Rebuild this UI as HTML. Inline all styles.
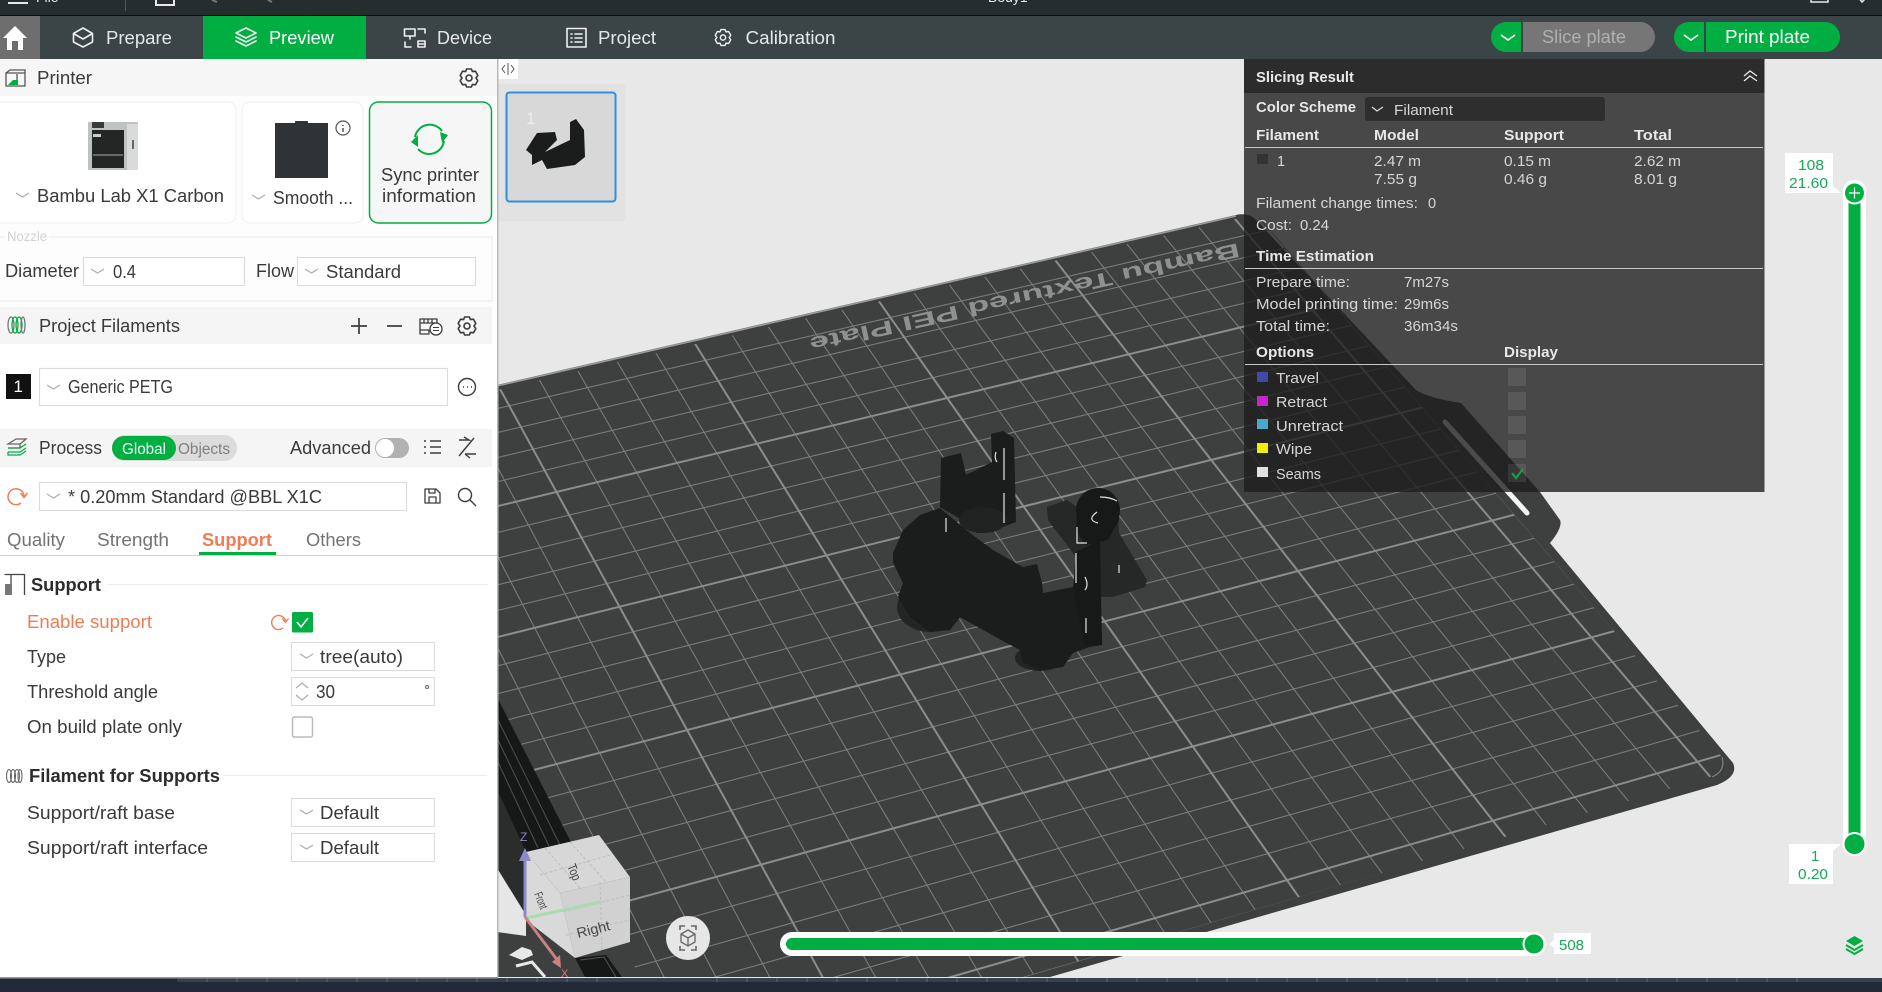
<!DOCTYPE html>
<html lang="en"><head><meta charset="utf-8"><title>Bambu Studio Preview</title>
<style>
html,body{margin:0;padding:0;background:#e8e8e8;width:1882px;height:992px;overflow:hidden}
svg{display:block}
text{font-family:"Liberation Sans","Noto Sans CJK SC",sans-serif;font-size:18px;fill:#3a3a3a}
.n{font-size:18.5px;fill:#e6e8e8}
.s{font-size:14.5px;fill:#d6d6d6}
.b{font-size:14.5px;fill:#e8e8e8;font-weight:bold}
.g{font-size:15px;fill:#14a955}
.c{fill:none;stroke:#aeaeae;stroke-width:1.2}
.i{fill:none;stroke:#3c3c3c;stroke-width:1.6;stroke-linejoin:round;stroke-linecap:round}
.w{fill:none;stroke:#f0f0f0;stroke-width:1.6;stroke-linejoin:round;stroke-linecap:round}
.box{fill:#fff;stroke:#dcdcdc;stroke-width:1.2}
</style></head><body>
<svg xmlns="http://www.w3.org/2000/svg" width="1882" height="992" viewBox="0 0 1882 992">
<defs>
<clipPath id="gc"><path d="M497 390L1239 218L1260 218L1722 757Q1727 770 1710 777L1025 977L640 977L497 697Z"/></clipPath>
<g id="gear"><path d="M-2.4-9L2.4-9L3.4-6.4L6.4-6.8L8.8-2.6L7 0L8.8 2.6L6.4 6.8L3.4 6.4L2.4 9L-2.4 9L-3.4 6.4L-6.4 6.8L-8.8 2.6L-7 0L-8.8-2.6L-6.4-6.8L-3.4-6.4Z"/><circle r="3"/></g>
<clipPath id="topclip"><rect x="0" y="0" width="1882" height="15"/></clipPath>
</defs>

<!-- viewport -->
<rect x="0" y="0" width="1882" height="992" fill="#e8e8e8"/>
<path d="M497 385L1236 215Q1250 212 1258 222L1416 390Q1428 398 1461 403L1540 492L1560 520Q1563 527 1550 543L1733 763Q1739 776 1717 785L1050 977L497 977Z" fill="#3e4040"/>
<path d="M497 386L1236 216" stroke="#9a9a9a" stroke-width="1.6" fill="none"/>

<g clip-path="url(#gc)" fill="none">
<path stroke="#7a7c7c" stroke-width="1.1" d="M318 450L1359 209M329 472L1375 227M339 495L1392 246M350 517L1408 264M372 563L1443 303M383 586L1462 323M395 610L1480 344M406 633L1499 364M429 683L1536 405M441 708L1555 426M452 734L1575 447M464 759L1594 468M490 813L1634 512M503 841L1655 535M517 868L1675 557M530 896L1696 580M559 954L1739 627M574 984L1760 652M687 985L1782 676M807 985L1803 701M997 985L1839 741
M365 385L668 985M404 376L720 985M444 367L774 985M522 349L880 985M560 340L933 985M599 331L986 985M637 322L1040 985M713 305L1143 981M749 297L1187 967M786 289L1232 954M822 281L1276 940M894 265L1362 915M929 257L1404 903M964 249L1445 891M999 241L1487 879M1070 225L1570 855M1105 217L1612 843M1141 208L1653 831M1176 200L1695 819M1233 187L1760 800"/>
<path stroke="#8b8d8d" stroke-width="2" d="M361 539L1425 283M417 657L1517 384M476 785L1613 489M544 924L1717 603M923 985L1825 725M483 358L827 985M676 313L1093 985M859 273L1320 927M1034 233L1529 867M1212 192L1736 807"/>
</g>
<path d="M1712 777Q1726 771 1722 757" fill="none" stroke="#7e8080" stroke-width="1.2"/>

<text x="1238" y="243" transform="rotate(167.5 1238 243)" style="font-size:20px;font-weight:bold;fill:#8f9090" textLength="440" lengthAdjust="spacingAndGlyphs">Bambu Textured PEI Plate</text>

<!-- slot -->
<path d="M1445 422L1527 513" stroke="#f4f4f4" stroke-width="5" stroke-linecap="round"/>

<!-- left bed edge pieces -->
<path d="M497 697L575 850L526 852L497 790Z" fill="#161717"/>
<path d="M497 718L560 845M497 738L549 846M497 760L538 848" stroke="#505050" stroke-width="1" fill="none"/>
<path d="M497 790L526 852L526 925L497 870Z" fill="#2b2c2c"/>
<path d="M497 868L526 915L526 936L497 932Z" fill="#e6e6e6"/>
<path d="M575 958L606 955L622 977L585 977Z" fill="#161717"/>
<path d="M580 960L604 957L616 977" fill="none" stroke="#555" stroke-width="1"/>
<path d="M509 955L522 947L531 950L533 955L522 960Z" fill="#e8e8e8"/>
<path d="M516 966L532 962L545 977" fill="none" stroke="#e8e8e8" stroke-width="3"/>

<!-- model -->
<g fill="#1b1c1c">
<path d="M941 458L961 453L966 475L992 462L991 434L1003 431L1014 438L1016 522L1003 527L993 532L977 533L967 523L940 507Z"/>
<ellipse cx="983" cy="520" rx="24" ry="13" fill="#202121"/>
<ellipse cx="930" cy="607" rx="33" ry="25" fill="#232424"/>
<ellipse cx="1040" cy="658" rx="25" ry="13" fill="#232424"/>
<path d="M893 553L903 530L920 515L940 508L970 533L993 550L1023 567L1037 564L1042 583L1043 593L1073 587L1077 583L1090 580L1100 577L1102 645L1090 647L1073 653L1063 667L1040 670L1023 663L1020 650L1007 643L960 617L950 630L930 632L910 617L898 597L903 583L893 563Z"/>
<path d="M960 560L1042 590L1045 650L1010 645L960 617Z"/>
<path fill="#262727" d="M1047 507L1067 500L1077 507L1082 495L1100 488L1117 500L1119 533L1147 580L1145 587L1113 597L1100 597L1093 577L1073 553L1048 520Z"/>
<circle cx="1098" cy="510" r="22" fill="#171818"/>
<path fill="#171818" d="M1077 507L1082 495L1100 488L1117 500L1119 520L1108 540L1085 545L1076 530Z"/>
<path fill="#171818" d="M1076 552L1100 540L1102 645L1085 645L1073 590Z"/>
</g>
<path d="M1004 448V480M1004 493V523M946 518V532M1077 527V543H1087M1076 553V583M1119 565V573M1086 618V633M996 452Q994 458 997 462M1097 512Q1086 520 1098 523M1100 497Q1110 497 1117 501M1085 577Q1089 585 1085 590" stroke="#e4e4e4" stroke-width="1.2" fill="none"/>

<!-- thumbnail -->
<rect x="497" y="84" width="129" height="137" rx="4" fill="#e2e2e2"/>
<rect x="506.5" y="92.5" width="109" height="109" rx="3" fill="#d8d8d8" stroke="#2f8fe0" stroke-width="2"/>
<text x="526" y="124" style="font-size:17px;fill:#ececec">1</text>
<path d="M526 150L537 133L555 132L557 140L545 152L570 140L570 122L576 119L584 130L585 157L575 165L547 169L542 160L532 165L532 155Z" fill="#1b1c1c"/>
<rect x="497" y="59" width="21" height="20" fill="#fff"/>
<path d="M505 65L502 69L505 73M508 63V75M511 65L514 69L511 73" fill="none" stroke="#555" stroke-width="1"/>

<!-- slicing panel -->
<rect x="1244" y="59" width="520.5" height="433" fill="#1d1d1d" fill-opacity=".79"/>
<rect x="1244" y="59" width="520.5" height="34" fill="#000" fill-opacity=".38"/>
<text class="b" x="1256" y="82" textLength="98" lengthAdjust="spacingAndGlyphs">Slicing Result</text>
<path d="M1744 76L1750 71L1757 76M1744 81L1750 76L1757 81" fill="none" stroke="#e8e8e8" stroke-width="1.3"/>
<text class="b" x="1256" y="112" textLength="100" lengthAdjust="spacingAndGlyphs">Color Scheme</text>
<rect x="1365" y="97" width="240" height="24" rx="3" fill="#2e2e2e"/>
<path d="M1372 107L1377 111L1383 107" fill="none" stroke="#ddd" stroke-width="1.2"/>
<text class="s" x="1394" y="115" textLength="59" lengthAdjust="spacingAndGlyphs">Filament</text>
<text class="b" x="1256" y="140" textLength="63" lengthAdjust="spacingAndGlyphs">Filament</text>
<text class="b" x="1374" y="140" textLength="45" lengthAdjust="spacingAndGlyphs">Model</text>
<text class="b" x="1504" y="140" textLength="60" lengthAdjust="spacingAndGlyphs">Support</text>
<text class="b" x="1634" y="140" textLength="38" lengthAdjust="spacingAndGlyphs">Total</text>
<path d="M1245 147.5H1763M1245 268.5H1763M1245 364.5H1763" stroke="#c8c8c8" stroke-width="1"/>
<rect x="1257" y="154" width="11" height="10" fill="#333"/>
<text class="s" x="1277" y="166">1</text>
<text class="s" x="1374" y="166" textLength="47" lengthAdjust="spacingAndGlyphs">2.47 m</text>
<text class="s" x="1374" y="184" textLength="43" lengthAdjust="spacingAndGlyphs">7.55 g</text>
<text class="s" x="1504" y="166" textLength="47" lengthAdjust="spacingAndGlyphs">0.15 m</text>
<text class="s" x="1504" y="184" textLength="43" lengthAdjust="spacingAndGlyphs">0.46 g</text>
<text class="s" x="1634" y="166" textLength="47" lengthAdjust="spacingAndGlyphs">2.62 m</text>
<text class="s" x="1634" y="184" textLength="43" lengthAdjust="spacingAndGlyphs">8.01 g</text>
<text class="s" x="1256" y="208" textLength="162" lengthAdjust="spacingAndGlyphs">Filament change times:</text>
<text class="s" x="1428" y="208">0</text>
<text class="s" x="1256" y="230" textLength="36" lengthAdjust="spacingAndGlyphs">Cost:</text>
<text class="s" x="1300" y="230" textLength="29" lengthAdjust="spacingAndGlyphs">0.24</text>
<text class="b" x="1256" y="261" textLength="118" lengthAdjust="spacingAndGlyphs">Time Estimation</text>
<text class="s" x="1256" y="287" textLength="94" lengthAdjust="spacingAndGlyphs">Prepare time:</text>
<text class="s" x="1404" y="287" textLength="45" lengthAdjust="spacingAndGlyphs">7m27s</text>
<text class="s" x="1256" y="309" textLength="142" lengthAdjust="spacingAndGlyphs">Model printing time:</text>
<text class="s" x="1404" y="309" textLength="45" lengthAdjust="spacingAndGlyphs">29m6s</text>
<text class="s" x="1256" y="331" textLength="74" lengthAdjust="spacingAndGlyphs">Total time:</text>
<text class="s" x="1404" y="331" textLength="54" lengthAdjust="spacingAndGlyphs">36m34s</text>
<text class="b" x="1256" y="357" textLength="58" lengthAdjust="spacingAndGlyphs">Options</text>
<text class="b" x="1504" y="357" textLength="54" lengthAdjust="spacingAndGlyphs">Display</text>
<rect x="1257" y="372" width="11" height="10" fill="#3d4aa8"/>
<rect x="1257" y="396" width="11" height="10" fill="#c825d0"/>
<rect x="1257" y="419" width="11" height="10" fill="#4aa8cc"/>
<rect x="1257" y="443" width="11" height="10" fill="#f0f000"/>
<rect x="1257" y="467" width="11" height="10" fill="#e0e0e0"/>
<text class="s" x="1276" y="383" textLength="43" lengthAdjust="spacingAndGlyphs">Travel</text>
<text class="s" x="1276" y="407" textLength="51" lengthAdjust="spacingAndGlyphs">Retract</text>
<text class="s" x="1276" y="431" textLength="67" lengthAdjust="spacingAndGlyphs">Unretract</text>
<text class="s" x="1276" y="454" textLength="36" lengthAdjust="spacingAndGlyphs">Wipe</text>
<text class="s" x="1276" y="479" textLength="45" lengthAdjust="spacingAndGlyphs">Seams</text>
<g fill="#fff" fill-opacity=".09">
<rect x="1508" y="368" width="18" height="18"/><rect x="1508" y="392" width="18" height="18"/><rect x="1508" y="416" width="18" height="18"/><rect x="1508" y="440" width="18" height="18"/><rect x="1508" y="464" width="18" height="18"/>
</g>
<path d="M1512 473L1516 478L1523 469" fill="none" stroke="#14a04c" stroke-width="2.2"/>

<!-- vertical slider -->
<rect x="1843" y="180" width="23" height="676" rx="11" fill="#fff"/>
<rect x="1848.5" y="194" width="12" height="650" fill="#00ae42"/>
<circle cx="1854.5" cy="193" r="11.5" fill="#fff"/><circle cx="1854.5" cy="193" r="9.5" fill="#00ae42"/>
<path d="M1849 193H1860M1854.500 187.500V198.500" stroke="#fff" stroke-width="1.2"/>
<circle cx="1854.500" cy="844" r="12" fill="#fff"/><circle cx="1854.500" cy="844" r="10" fill="#00ae42"/>
<path d="M1785 153H1833V186L1841 193H1785Z" fill="#fff"/>
<text class="g" x="1798" y="170" textLength="26" lengthAdjust="spacingAndGlyphs">108</text>
<text class="g" x="1789" y="188" textLength="39" lengthAdjust="spacingAndGlyphs">21.60</text>
<path d="M1789 844H1841L1833 851V884H1789Z" fill="#fff"/>
<text class="g" x="1811" y="861">1</text>
<text class="g" x="1798" y="879" textLength="30" lengthAdjust="spacingAndGlyphs">0.20</text>
<path d="M1854.500 936L1863 941L1854.500 946L1846 941Z" fill="#00ae42"/>
<path d="M1846 945L1854.500 950L1863 945M1846 949L1854.500 954L1863 949" fill="none" stroke="#00ae42" stroke-width="2"/>

<!-- horizontal slider -->
<rect x="780" y="932" width="766" height="24" rx="12" fill="#fff"/>
<rect x="786" y="938" width="750" height="12" rx="6" fill="#00ae42"/>
<circle cx="1534" cy="944" r="11.500" fill="#fff"/><circle cx="1534" cy="944" r="9.500" fill="#00ae42"/>
<path d="M1554 933H1591V954H1554V948L1549 944L1554 940Z" fill="#fff"/>
<text class="g" x="1559" y="950" textLength="25" lengthAdjust="spacingAndGlyphs">508</text>

<!-- camera button -->
<circle cx="688" cy="938" r="22" fill="#e6e6e6"/>
<path d="M680 930V926H685M696 930V926H691M680 946V950H685M696 946V950H691" fill="none" stroke="#666" stroke-width="1.6"/>
<path d="M688 930L695 934V942L688 946L681 942V934ZM681 934L688 938L695 934M688 938V946" fill="none" stroke="#666" stroke-width="1.3"/>

<!-- nav cube -->
<path d="M526 852L599 835L630 877L560 893Z" fill="#d6d7d6"/>
<path d="M560 893L630 877V942L575 958Z" fill="#d0d1d0"/>
<path d="M526 852L560 893L575 958L526 920Z" fill="#d8d9d8"/>
<path d="M545 848L580 888M570 842L606 882M540 875L610 855M563 912L630 895M566 935L630 920M600 882L602 950" fill="none" stroke="#bdbebd" stroke-width="1" stroke-dasharray="3 2"/>
<text x="0" y="0" transform="translate(567 866) rotate(68) scale(.8 1)" style="font-size:13px;fill:#444">Top</text>
<text x="0" y="0" transform="translate(578 938) rotate(-14)" style="font-size:14px;fill:#444" textLength="34" lengthAdjust="spacingAndGlyphs">Right</text>
<text x="0" y="0" transform="translate(534 894) rotate(68) scale(.62 1)" style="font-size:12px;fill:#444">Front</text>
<path d="M526 918L601 902" stroke="#a8dcb0" stroke-width="3"/>
<path d="M525 917V860" stroke="#8a8ac8" stroke-width="3"/><path d="M519 861L525 848L531 861Z" fill="#8a8ac8"/>
<path d="M525 917L558 961" stroke="#cf7f7f" stroke-width="3"/><path d="M552 962L561 968L560 955Z" fill="#cf7f7f"/>
<text x="520" y="841" style="font-size:12px;fill:#8a8ac8">Z</text>
<text x="561" y="977" style="font-size:11px;fill:#cf7f7f">X</text>

<!-- bottom bar -->
<rect x="0" y="978" width="1882" height="14" fill="#212a36"/>
<rect x="177" y="978" width="1705" height="4" fill="#36414f"/>
<path d="M207 978v4M237 978v4M267 978v4M297 978v4M327 978v4M357 978v4M387 978v4M417 978v4M447 978v4M477 978v4M507 978v4M537 978v4M567 978v4M597 978v4M717 978v4M747 978v4M777 978v4M807 978v4M837 978v4M867 978v4M897 978v4M927 978v4M957 978v4M987 978v4M1017 978v4M1047 978v4M1077 978v4M1107 978v4M1137 978v4M1167 978v4M1197 978v4M1227 978v4M1257 978v4M1287 978v4M1317 978v4M1347 978v4M1377 978v4M1407 978v4M1437 978v4M1467 978v4M1497 978v4M1527 978v4M1557 978v4M1587 978v4M1617 978v4M1647 978v4M1677 978v4M1707 978v4M1737 978v4M1767 978v4M1797 978v4" stroke="#5a6674" stroke-width="1"/>

<!-- top bars -->
<rect x="0" y="0" width="1882" height="15" fill="#262d2f"/>
<rect x="0" y="15" width="1882" height="1" fill="#0c0e0e"/>
<rect x="0" y="16" width="1882" height="43" fill="#3b4446"/>
<g clip-path="url(#topclip)">
<rect x="8" y="2" width="20" height="2" fill="#e8e8e8"/>
<text x="36" y="2" style="font-size:14px;fill:#e8e8e8">File</text>
<rect x="125" y="0" width="1" height="11" fill="#555"/>
<rect x="156" y="-6" width="18" height="11" fill="none" stroke="#e8e8e8" stroke-width="2"/>
<path d="M212 0L217 2L212 0M268 0L272 2" stroke="#777" stroke-width="2" fill="none"/>
<text x="988" y="2" style="font-size:14px;fill:#e8e8e8">Body1</text>
<rect x="1811" y="-8" width="17" height="10" fill="none" stroke="#e8e8e8" stroke-width="1.5"/>
<path d="M1858 -3L1862 2L1867 -3" stroke="#e8e8e8" stroke-width="1.5" fill="none"/>
</g>
<rect x="0" y="16" width="40" height="43" fill="#6e6e6e"/>
<path d="M15 26L3 38H7V50H12V41H18V50H23V38H27Z" fill="#fff"/>
<rect x="203" y="16" width="163" height="43" fill="#00ae42"/>

<path class="w" d="M83 28L92.500 33.500V42L83 47L73.500 42V33.500ZM73.500 33.500L83 39L92.500 33.500"/>
<text class="n" x="106" y="44" textLength="66" lengthAdjust="spacingAndGlyphs">Prepare</text>
<path class="w" d="M246 28L256 33L246 38L236 33ZM236 37L246 42L256 37M236 41L246 46L256 41"/>
<text class="n" x="269" y="44" textLength="65" lengthAdjust="spacingAndGlyphs" style="fill:#fff">Preview</text>
<path class="w" d="M404.500 29H415V36H404.500ZM410 36V39M418 29H425V33M405 42V47H411M425 41V47H418V41ZM418 44H425"/>
<text class="n" x="437" y="44" textLength="55" lengthAdjust="spacingAndGlyphs">Device</text>
<path class="w" d="M567 28.500H586V47H567ZM571 34H572M575 34H582M571 38H572M575 38H582M571 42H572M575 42H582"/>
<text class="n" x="598" y="44" textLength="58" lengthAdjust="spacingAndGlyphs">Project</text>
<use href="#gear" transform="translate(723 37.500) scale(.88)" class="w"/>
<text class="n" x="745.500" y="44" textLength="90" lengthAdjust="spacingAndGlyphs">Calibration</text>

<!-- action buttons -->
<path d="M1506 22H1521V52H1506A15 15 0 0 1 1506 22Z" fill="#00ae42"/>
<path d="M1523 22H1640A15 15 0 0 1 1640 52H1523Z" fill="#767676"/>
<path d="M1501 35L1508 40L1515 35" fill="none" stroke="#fff" stroke-width="1.6"/>
<text class="n" x="1542" y="43" textLength="84" lengthAdjust="spacingAndGlyphs" style="fill:#b0b0b0">Slice plate</text>
<path d="M1689 22H1704V52H1689A15 15 0 0 1 1689 22Z" fill="#00ae42"/>
<path d="M1706 22H1825A15 15 0 0 1 1825 52H1706Z" fill="#00ae42"/>
<path d="M1684 35L1691 40L1698 35" fill="none" stroke="#fff" stroke-width="1.6"/>
<text class="n" x="1725" y="43" textLength="85" lengthAdjust="spacingAndGlyphs" style="fill:#fff">Print plate</text>

<!-- SIDEBAR -->
<rect x="0" y="59" width="497" height="918" fill="#fff"/>
<rect x="497" y="59" width="1.500" height="918" fill="#b8b8b8"/>
<rect x="0" y="977" width="498" height="1.500" fill="#9a9a9a"/>
<rect x="0" y="59" width="497" height="37" fill="#f6f6f6"/>
<rect x="0" y="96" width="497" height="211" fill="#fdfdfd"/>
<rect x="0" y="307" width="492" height="37" fill="#f5f5f5"/>
<rect x="0" y="429" width="492" height="38" fill="#f5f5f5"/>

<path d="M6 73H25V86H6ZM6 73L10 70H25V73M17 85V74" fill="none" stroke="#555" stroke-width="1.300"/>
<path d="M8 85L13 80H18V85Z" fill="#00ae42"/>
<text x="37" y="84" textLength="55" lengthAdjust="spacingAndGlyphs">Printer</text>
<use href="#gear" transform="translate(469 78)" class="i"/>

<rect x="-5" y="102" width="241" height="121" rx="8" fill="#fff" stroke="#efefef"/>
<rect x="242" y="102" width="121" height="121" rx="8" fill="#fff" stroke="#efefef"/>
<rect x="369.500" y="102" width="122" height="121" rx="9" fill="#f6f6f6" stroke="#00ae42" stroke-width="1.500"/>

<rect x="88" y="122" width="50" height="48" rx="1" fill="#bfc2c2"/>
<rect x="127" y="124" width="11" height="46" fill="#d9dbdb"/>
<rect x="92" y="130" width="32" height="38" fill="#242626"/>
<rect x="92" y="122" width="12" height="6" fill="#3a3c3c"/>
<path d="M93 155H123" stroke="#aaa" stroke-width="1"/>
<rect x="93" y="134" width="8" height="3" fill="#ccc"/>
<rect x="132" y="140" width="2" height="9" fill="#666"/>
<path class="c" d="M16 193L22.500 197L29 193"/>
<text x="37" y="202" textLength="187" lengthAdjust="spacingAndGlyphs">Bambu Lab X1 Carbon</text>

<rect x="275" y="123" width="53" height="55" fill="#2f3335"/>
<rect x="295" y="121" width="13" height="3" rx="1" fill="#2f3335"/>
<circle cx="343" cy="128" r="7" fill="none" stroke="#555" stroke-width="1.200"/>
<path d="M343 125V126M343 128V132" stroke="#555" stroke-width="1.500"/>
<path class="c" d="M252 195L258.500 199L265 195"/>
<text x="273" y="204" textLength="80" lengthAdjust="spacingAndGlyphs">Smooth ...</text>

<path d="M415 137A15 15 0 0 1 442 131M444 141A15 15 0 0 1 418 149" fill="none" stroke="#00ae42" stroke-width="2"/>
<path d="M440 132L448 135L442 143ZM418 135L411 142L418 147Z" fill="#00ae42"/>
<text x="381" y="181" textLength="98" lengthAdjust="spacingAndGlyphs">Sync printer</text>
<text x="382" y="202" textLength="94" lengthAdjust="spacingAndGlyphs">information</text>

<path d="M0 237H5M49 237H492V301H0" fill="none" stroke="#ececec" stroke-width="1"/>
<text x="7" y="241" textLength="40" lengthAdjust="spacingAndGlyphs" style="font-size:13.500px;fill:#d2d2d2">Nozzle</text>
<text x="5" y="277" textLength="74" lengthAdjust="spacingAndGlyphs">Diameter</text>
<rect class="box" x="83.500" y="257.500" width="161" height="28"/>
<path class="c" d="M91 269L97.500 273L104 269"/>
<text x="113" y="278" textLength="23" lengthAdjust="spacingAndGlyphs">0.4</text>
<text x="256" y="277" textLength="38" lengthAdjust="spacingAndGlyphs">Flow</text>
<rect class="box" x="297.500" y="257.500" width="178" height="28"/>
<path class="c" d="M305 269L311.500 273L318 269"/>
<text x="326" y="278" textLength="75" lengthAdjust="spacingAndGlyphs">Standard</text>

<g fill="none" stroke-width="1.300"><ellipse cx="11" cy="325" rx="3" ry="8" stroke="#777"/><ellipse cx="15" cy="325" rx="3" ry="8" stroke="#00ae42"/><ellipse cx="19" cy="325" rx="3" ry="8" stroke="#00ae42"/><ellipse cx="23" cy="325" rx="2" ry="8" stroke="#777"/></g>
<text x="39" y="332" textLength="141" lengthAdjust="spacingAndGlyphs">Project Filaments</text>
<path d="M359 318V334M351 326H367M387 326H402" stroke="#3c3c3c" stroke-width="1.700"/>
<path class="i" d="M420 330V319H437V326M420 323H437M424 319V323M428 319V323M432 319V323M420 330H429V334H420Z" style="stroke-width:1.300"/>
<circle cx="436" cy="329" r="6" fill="#fff" stroke="#3c3c3c" stroke-width="1.300"/>
<path d="M433 327.500H439M433 330.500H439" stroke="#3c3c3c" stroke-width="1"/>
<use href="#gear" transform="translate(467 326)" class="i"/>

<rect x="6" y="374" width="25" height="25" fill="#111"/>
<text x="13.500" y="392" style="fill:#fff;font-size:17px">1</text>
<rect class="box" x="39.500" y="368.500" width="408" height="37"/>
<path class="c" d="M47 385L53.500 389L60 385"/>
<text x="68" y="393" textLength="105" lengthAdjust="spacingAndGlyphs">Generic PETG</text>
<circle cx="467" cy="387" r="8.500" fill="none" stroke="#3c3c3c" stroke-width="1.400"/>
<path d="M463 387h1M467 387h1M471 387h1" stroke="#3c3c3c" stroke-width="1.500"/>

<path d="M8 444L16 439H26L20 444ZM8 444H20V448H8" fill="none" stroke="#666" stroke-width="1.300"/>
<path d="M8 448H20L26 444M8 452H20L26 448M8 452V455H20L26 451" fill="none" stroke="#00ae42" stroke-width="1.300"/>
<text x="39" y="454" textLength="63" lengthAdjust="spacingAndGlyphs">Process</text>
<rect x="112" y="435" width="125" height="26" rx="13" fill="#dcdcdc"/>
<rect x="112" y="436" width="64" height="24" rx="12" fill="#00ae42"/>
<text x="122" y="454" textLength="44" lengthAdjust="spacingAndGlyphs" style="font-size:15.500px;fill:#eefff4">Global</text>
<text x="178" y="454" textLength="52" lengthAdjust="spacingAndGlyphs" style="font-size:15.500px;fill:#808080">Objects</text>
<text x="290" y="454" textLength="81" lengthAdjust="spacingAndGlyphs">Advanced</text>
<rect x="375" y="438" width="34" height="20" rx="10" fill="#b2b2b2"/>
<circle cx="385" cy="448" r="9" fill="#fff"/>
<path d="M424 441h2M424 447h2M424 453h2M430 441h11M430 447h11M430 453h11" stroke="#3c3c3c" stroke-width="1.500"/>
<path d="M459 440H469L464 437M474 438L459 456M465 454H476M465 454L470 458" fill="none" stroke="#3c3c3c" stroke-width="1.400"/>

<path d="M24 496A8 8 0 1 0 21 503" fill="none" stroke="#ee7c55" stroke-width="1.500"/><path d="M20.500 493L24 497.500L27.500 493" fill="none" stroke="#ee7c55" stroke-width="1.500"/>
<rect class="box" x="39.500" y="482.500" width="367" height="28"/>
<path class="c" d="M47 494L53.500 498L60 494"/>
<text x="68" y="503" textLength="254" lengthAdjust="spacingAndGlyphs">* 0.20mm Standard @BBL X1C</text>
<path class="i" d="M425 489H436L440 493V503H425ZM429 489V493H435V489M429 503V497H436V503" style="stroke-width:1.300"/>
<circle cx="465" cy="495" r="6.500" fill="none" stroke="#3c3c3c" stroke-width="1.400"/><path d="M470 500L476 506" stroke="#3c3c3c" stroke-width="1.400"/>

<text x="7" y="546" textLength="58" lengthAdjust="spacingAndGlyphs" style="fill:#737373">Quality</text>
<text x="97" y="546" textLength="72" lengthAdjust="spacingAndGlyphs" style="fill:#737373">Strength</text>
<text x="202" y="546" textLength="70" lengthAdjust="spacingAndGlyphs" style="fill:#ee7c55;font-weight:bold">Support</text>
<text x="306" y="546" textLength="55" lengthAdjust="spacingAndGlyphs" style="fill:#737373">Others</text>
<rect x="0" y="555" width="497" height="1" fill="#d0d0d0"/>
<rect x="199" y="552" width="77" height="3" fill="#00ae42"/>

<path d="M4.500 574.500H24.500V595M11 574.500V595" fill="none" stroke="#444" stroke-width="1.300"/>
<rect x="5" y="584" width="7" height="11" fill="#777"/>
<text x="31" y="591" textLength="70" lengthAdjust="spacingAndGlyphs" style="font-weight:bold;fill:#2c2c2c">Support</text>
<path d="M108 584.500H488" stroke="#ededed"/>
<text x="27" y="628" textLength="125" lengthAdjust="spacingAndGlyphs" style="fill:#ee7c55">Enable support</text>
<path d="M285.500 621A7 7 0 1 0 283 628" fill="none" stroke="#ee7c55" stroke-width="1.400"/><path d="M282.500 618.500L285.500 622.500L288.500 618.500" fill="none" stroke="#ee7c55" stroke-width="1.400"/>
<rect x="292" y="612" width="21" height="20.500" rx="1.500" fill="#00ae42"/>
<path d="M297 622L301 627L308 618" fill="none" stroke="#fff" stroke-width="1.500"/>

<text x="27" y="663" textLength="39" lengthAdjust="spacingAndGlyphs">Type</text>
<rect class="box" x="291.500" y="642.500" width="143" height="28"/>
<path class="c" d="M300 654L306.500 658L313 654"/>
<text x="320" y="663" textLength="83" lengthAdjust="spacingAndGlyphs">tree(auto)</text>
<text x="27" y="698" textLength="131" lengthAdjust="spacingAndGlyphs">Threshold angle</text>
<rect class="box" x="291.500" y="677.500" width="143" height="28"/>
<path class="c" d="M296 688L302 683L308 688M296 695L302 700L308 695"/>
<text x="316" y="698" textLength="19" lengthAdjust="spacingAndGlyphs">30</text>
<circle cx="427" cy="687" r="1.500" fill="none" stroke="#666"/>
<text x="27" y="733" textLength="155" lengthAdjust="spacingAndGlyphs">On build plate only</text>
<rect x="292.500" y="717" width="20" height="20" rx="2" fill="#fff" stroke="#bbb" stroke-width="1.500"/>

<g fill="none" stroke="#666" stroke-width="1.100"><ellipse cx="9" cy="776" rx="2.500" ry="6.500"/><ellipse cx="13" cy="776" rx="2.500" ry="6.500"/><ellipse cx="17" cy="776" rx="2.500" ry="6.500"/><ellipse cx="20" cy="776" rx="2" ry="6.500"/></g>
<text x="29" y="782" textLength="191" lengthAdjust="spacingAndGlyphs" style="font-weight:bold;fill:#2c2c2c">Filament for Supports</text>
<path d="M223 775.500H487" stroke="#ededed"/>
<text x="27" y="819" textLength="148" lengthAdjust="spacingAndGlyphs">Support/raft base</text>
<rect class="box" x="291.500" y="798.500" width="143" height="28"/>
<path class="c" d="M300 810L306.500 814L313 810"/>
<text x="320" y="819" textLength="59" lengthAdjust="spacingAndGlyphs">Default</text>
<text x="27" y="854" textLength="181" lengthAdjust="spacingAndGlyphs">Support/raft interface</text>
<rect class="box" x="291.500" y="833.500" width="143" height="28"/>
<path class="c" d="M300 845L306.500 849L313 845"/>
<text x="320" y="854" textLength="59" lengthAdjust="spacingAndGlyphs">Default</text>
</svg>
</body></html>
